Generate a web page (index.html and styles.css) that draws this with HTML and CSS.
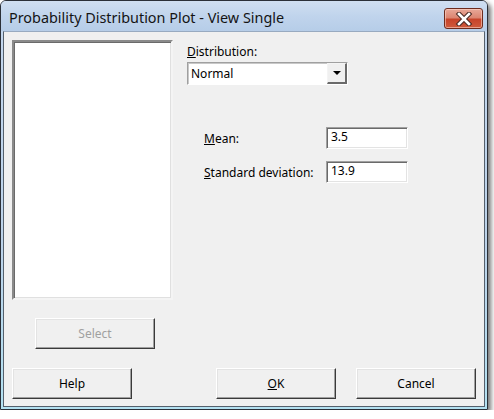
FILE: index.html
```html
<!DOCTYPE html>
<html>
<head>
<meta charset="utf-8">
<link rel="stylesheet" href="styles.css">
</head>
<body>
<div class="window">
  <div class="titlebar">
    <span class="title">Probability Distribution Plot - View Single</span>
    <div class="close">
      <svg width="20" height="14" viewBox="0 0 20 14">
        <path d="M5 2 L15 12 M15 2 L5 12" stroke="#4a2a24" stroke-width="4.6" stroke-linecap="square" fill="none"/>
        <path d="M5 2 L15 12 M15 2 L5 12" stroke="#ffffff" stroke-width="2.6" stroke-linecap="square" fill="none"/>
      </svg>
    </div>
  </div>
  <div class="client">
    <div class="top">
      <div class="left">
        <div class="listbox"></div>
        <div class="btn select disabled">Select</div>
      </div>
      <div class="right">
        <div class="label dist-label"><u>D</u>istribution:</div>
        <div class="combo">
          <span class="combo-text">Normal</span>
          <div class="combo-btn"><span class="arrow"></span></div>
        </div>
        <div class="params">
          <div class="param-row">
            <span class="label"><u>M</u>ean:</span>
            <div class="textbox">3.5</div>
          </div>
          <div class="param-row">
            <span class="label"><u>S</u>tandard deviation:</span>
            <div class="textbox">13.9</div>
          </div>
        </div>
      </div>
    </div>
    <div class="bottom">
      <div class="btn">Help</div>
      <div class="btn-group">
        <div class="btn"><u>O</u>K</div>
        <div class="btn">Cancel</div>
      </div>
    </div>
  </div>
</div>
</body>
</html>
```

FILE: styles.css
```css
html, body {
  margin: 0;
  padding: 0;
  background: #ffffff;
}
body {
  font-family: "Noto Sans", "DejaVu Sans", sans-serif;
  font-size: 12px;
  color: #000;
}
.window {
  width: 488px;
  height: 410px;
  box-sizing: border-box;
  border: 1px solid #2b3038;
  border-radius: 6px 6px 0 0;
  background: linear-gradient(to bottom, #c4d7ee 0%, #bcd3ea 60%, #b3e1f1 100%);
  box-shadow: 3px 3px 5px rgba(0,0,0,0.55);
  display: flex;
  flex-direction: column;
  padding: 0 2px 2px 2px;
}
.titlebar {
  height: 30px;
  display: flex;
  align-items: center;
  justify-content: space-between;
  padding-left: 8px;
  padding-right: 4px;
  background: linear-gradient(to bottom, #d0dff1 0%, #c0d4ec 50%, #b6cde8 100%);
  margin: 0 -2px;
  border-radius: 5px 5px 0 0;
}
.title {
  font-size: 14.4px;
  color: #141414;
  padding-top: 2px;
}
.close {
  width: 39px;
  height: 21px;
  margin-top: 5px;
  box-sizing: border-box;
  border: 1px solid #6d2c1e;
  border-radius: 3px;
  background: linear-gradient(to bottom, #e8a898 0%, #dc8672 45%, #c7442a 55%, #cf5a3c 100%);
  display: flex;
  align-items: center;
  justify-content: center;
  box-shadow: inset 0 0 0 1px rgba(255,220,210,0.55);
}
.close svg { display: block; }
.client {
  flex: 1;
  background: #f0f0f0;
  border: 1px solid #55606c;
  border-top-color: #98aac0;
  padding: 8px 8px 7px 8px;
  display: flex;
  flex-direction: column;
  justify-content: space-between;
}
.top {
  display: flex;
  gap: 14px;
}
.left {
  width: 161px;
  display: flex;
  flex-direction: column;
}
.listbox {
  height: 256px;
  background: #fff;
  border-top: 2px solid #8a8a8a;
  border-left: 2px solid #8a8a8a;
  border-bottom: 2px solid #f4f4f4;
  border-right: 2px solid #f4f4f4;
  box-shadow: inset 1px 1px 0 #6a6a6a, inset -1px -1px 0 #e0e0e0;
}
.btn {
  width: 120px;
  height: 31px;
  box-sizing: border-box;
  background: #f0f0f0;
  border-top: 1px solid #ffffff;
  border-left: 1px solid #ffffff;
  border-right: 1px solid #3a3a3a;
  border-bottom: 1px solid #3a3a3a;
  box-shadow: inset -1px -1px 0 #a0a0a0, inset 1px 1px 0 #e3e3e3;
  display: flex;
  align-items: center;
  justify-content: center;
}
.select {
  margin-top: 18px;
  margin-left: 23px;
}
.disabled {
  color: #a0a0a0;
}
.right {
  display: flex;
  flex-direction: column;
}
.dist-label {
  margin-top: 4px;
  line-height: 16px;
}
.combo {
  margin-top: 2px;
  width: 161px;
  height: 23px;
  box-sizing: border-box;
  background: #fff;
  border-top: 1px solid #a0a0a0;
  border-left: 1px solid #a0a0a0;
  border-bottom: 1px solid #ffffff;
  border-right: 1px solid #ffffff;
  box-shadow: inset 1px 1px 0 #c8c8c8;
  display: flex;
  align-items: center;
  justify-content: space-between;
}
.combo-text {
  padding-left: 3px;
}
.combo-btn {
  width: 20px;
  height: 21px;
  box-sizing: border-box;
  background: #f0f0f0;
  border-top: 1px solid #f4f4f4;
  border-left: 1px solid #f4f4f4;
  border-right: 2px solid #6a6a6a;
  border-bottom: 2px solid #6a6a6a;
  display: flex;
  align-items: center;
  justify-content: center;
}
.arrow {
  width: 0;
  height: 0;
  border-left: 4px solid transparent;
  border-right: 4px solid transparent;
  border-top: 4px solid #000;
}
.params {
  margin-top: 42px;
  margin-left: 17px;
  display: flex;
  flex-direction: column;
  gap: 12px;
}
.param-row {
  display: flex;
  align-items: center;
  width: 204px;
  justify-content: space-between;
}
.textbox {
  width: 82px;
  height: 22px;
  box-sizing: border-box;
  background: #fff;
  border-top: 1px solid #a0a0a0;
  border-left: 1px solid #a0a0a0;
  border-bottom: 1px solid #ffffff;
  border-right: 1px solid #ffffff;
  box-shadow: inset 1px 1px 0 #6a6a6a, inset -1px -1px 0 #e3e3e3;
  padding-left: 4px;
  line-height: 18px;
}
.bottom {
  display: flex;
  justify-content: space-between;
}
.btn-group {
  display: flex;
  gap: 20px;
}
u {
  text-decoration: underline;
  text-underline-offset: 1px;
}
```
